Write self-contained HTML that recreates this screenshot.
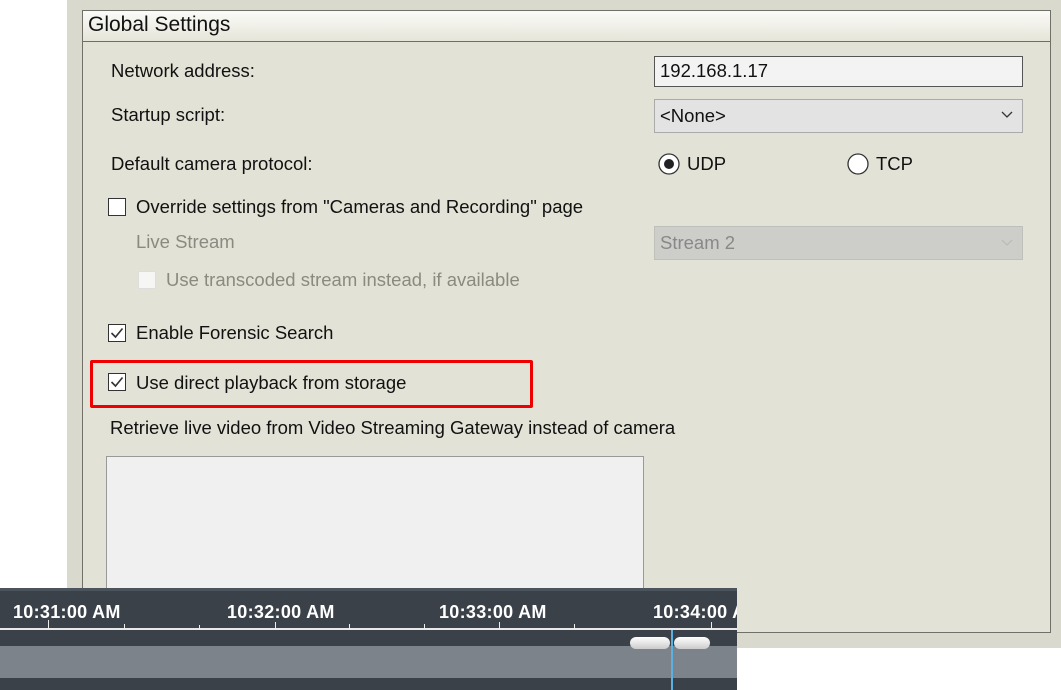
<!DOCTYPE html>
<html><head><style>
body{margin:0;width:1061px;height:690px;position:relative;overflow:hidden;background:#fff;font-family:"Liberation Sans",sans-serif;font-size:18.5px;color:#111;}
.a{position:absolute;}
.cb{position:absolute;width:18px;height:18px;border:1px solid #333;background:#fff;box-sizing:border-box;}
.t{position:absolute;white-space:nowrap;line-height:20px;}
.lbl{position:absolute;color:#fff;font-size:18px;font-weight:bold;top:14px;letter-spacing:0.3px;white-space:nowrap;}
.tick{position:absolute;width:1px;background:#eee;}
</style></head><body>
<div class="a" style="left:67px;top:0;width:994px;height:648px;background:#d9d9cd;"></div>
<div class="a" style="left:82px;top:10px;width:969px;height:623px;background:#e3e2d6;border:1px solid #707068;box-sizing:border-box;"></div>
<div class="a" style="left:83px;top:11px;width:967px;height:30px;background:linear-gradient(#fbfbf8,#e6e5d9);border-bottom:1px solid #6e6e66;"></div>
<div class="t" style="left:88px;top:15px;font-size:21px;">Global Settings</div>
<div class="t" style="left:111px;top:61px;">Network address:</div>
<div class="t" style="left:111px;top:105px;">Startup script:</div>
<div class="t" style="left:111px;top:154px;">Default camera protocol:</div>
<div class="a" style="left:654px;top:56px;width:369px;height:31px;background:#f3f3f3;border:1px solid #555;box-sizing:border-box;"></div>
<div class="t" style="left:660px;top:61px;">192.168.1.17</div>
<div class="a" style="left:654px;top:99px;width:369px;height:34px;background:#e3e3e3;border:1px solid #aaa;box-sizing:border-box;"></div>
<div class="t" style="left:660px;top:106px;">&lt;None&gt;</div>
<svg class="a" style="left:1000px;top:110px" width="14" height="10"><path d="M2 2 L7 7 L12 2" stroke="#333" fill="none" stroke-width="1.3"/></svg>
<svg class="a" style="left:657px;top:152px" width="24" height="24"><circle cx="12" cy="12" r="10" fill="#fff" stroke="#333" stroke-width="1.3"/><circle cx="12" cy="12" r="5" fill="#222"/></svg>
<div class="t" style="left:687px;top:154px;">UDP</div>
<svg class="a" style="left:846px;top:152px" width="24" height="24"><circle cx="12" cy="12" r="10" fill="#fff" stroke="#333" stroke-width="1.3"/></svg>
<div class="t" style="left:876px;top:154px;">TCP</div>
<div class="cb" style="left:108px;top:198px;"></div>
<div class="t" style="left:136px;top:197px;">Override settings from "Cameras and Recording" page</div>
<div class="t" style="left:136px;top:232px;color:#8a8a80;">Live Stream</div>
<div class="a" style="left:654px;top:226px;width:369px;height:34px;background:#cdcdc9;border:1px solid #c0c0bb;box-sizing:border-box;"></div>
<div class="t" style="left:660px;top:233px;color:#888;">Stream 2</div>
<svg class="a" style="left:1000px;top:238px" width="14" height="10"><path d="M2 2 L7 7 L12 2" stroke="#bbb" fill="none" stroke-width="1.3"/></svg>
<div class="cb" style="left:138px;top:271px;border-color:#ddd;background:#f6f6f4;"></div>
<div class="t" style="left:166px;top:270px;color:#8a8a80;">Use transcoded stream instead, if available</div>
<div class="cb" style="left:108px;top:324px;"></div>
<svg class="a" style="left:108px;top:324px" width="18" height="18"><path d="M3.5 9 L7.5 13 L14.5 4.5" stroke="#333" fill="none" stroke-width="1.6"/></svg>
<div class="t" style="left:136px;top:323px;">Enable Forensic Search</div>
<div class="cb" style="left:108px;top:373px;"></div>
<svg class="a" style="left:108px;top:373px" width="18" height="18"><path d="M3.5 9 L7.5 13 L14.5 4.5" stroke="#333" fill="none" stroke-width="1.6"/></svg>
<div class="t" style="left:136px;top:373px;">Use direct playback from storage</div>
<div class="a" style="left:90px;top:360px;width:443px;height:48px;border:3px solid #ee0000;box-sizing:border-box;border-radius:2px;"></div>
<div class="t" style="left:110px;top:418px;">Retrieve live video from Video Streaming Gateway instead of camera</div>
<div class="a" style="left:106px;top:456px;width:538px;height:140px;background:#f0f0f0;border:1px solid #999;box-sizing:border-box;"></div>
<!-- timeline -->
<div class="a" style="left:0;top:588px;width:737px;height:102px;background:#3b4149;overflow:hidden;">
<div class="a" style="left:0;top:0;width:737px;height:3px;background:#4b535c;"></div>
<div class="a" style="left:0;top:40px;width:737px;height:2px;background:#e8e8e8;"></div>
<div class="a" style="left:0;top:58px;width:737px;height:32px;background:#7d838b;"></div>
<div class="lbl" style="left:13px;">10:31:00 AM</div>
<div class="lbl" style="left:227px;">10:32:00 AM</div>
<div class="lbl" style="left:439px;">10:33:00 AM</div>
<div class="lbl" style="left:653px;">10:34:00 AM</div>
<div class="tick" style="left:48px;top:32px;height:9px;"></div>
<div class="tick" style="left:124px;top:36px;height:5px;"></div>
<div class="tick" style="left:199px;top:37px;height:4px;"></div>
<div class="tick" style="left:275px;top:34px;height:7px;"></div>
<div class="tick" style="left:349px;top:36px;height:5px;"></div>
<div class="tick" style="left:424px;top:36px;height:5px;"></div>
<div class="tick" style="left:499px;top:34px;height:7px;"></div>
<div class="tick" style="left:574px;top:36px;height:5px;"></div>
<div class="tick" style="left:711px;top:34px;height:7px;"></div>
<div class="a" style="left:630px;top:49px;width:40px;height:12px;background:linear-gradient(#fff,#ccc);border-radius:6px;"></div>
<div class="a" style="left:674px;top:49px;width:36px;height:12px;background:linear-gradient(#fff,#ccc);border-radius:6px;"></div>
<div class="a" style="left:671px;top:42px;width:2px;height:60px;background:#5ab0e0;"></div>
</div>
</body></html>
